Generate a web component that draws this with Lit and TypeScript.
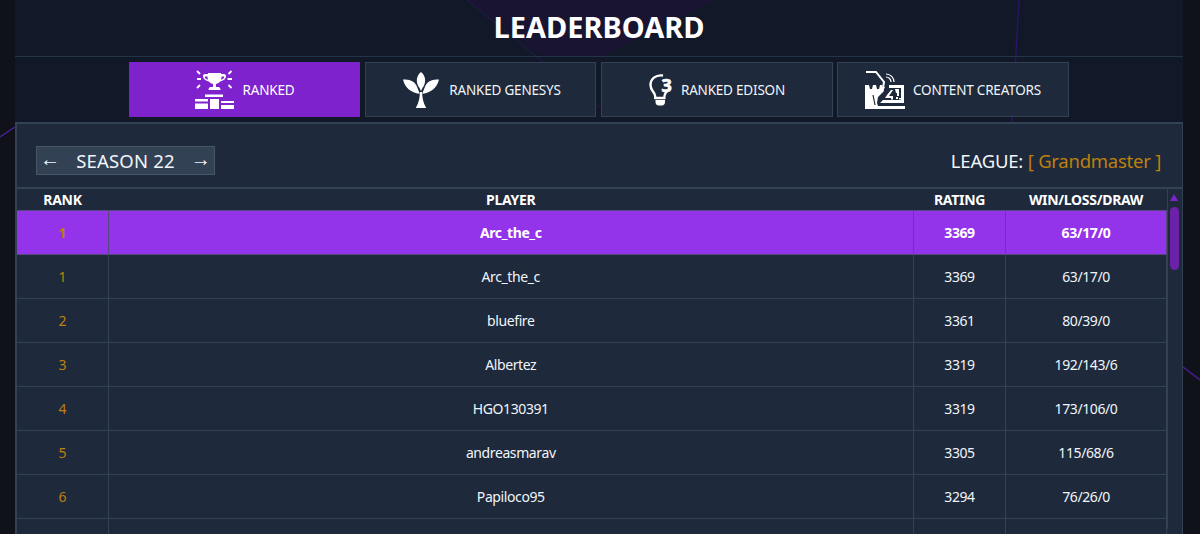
import { LitElement, html, css, svg } from "lit";
import { customElement } from "lit/decorators.js";

const rows = [
  ["1", "Arc_the_c", "3369", "63/17/0"],
  ["2", "bluefire", "3361", "80/39/0"],
  ["3", "Albertez", "3319", "192/143/6"],
  ["4", "HGO130391", "3319", "173/106/0"],
  ["5", "andreasmarav", "3305", "115/68/6"],
  ["6", "Papiloco95", "3294", "76/26/0"],
  ["", "", "", ""],
];

const trophy = svg`<svg class="ico" width="39" height="39" viewBox="0 0 39 39" fill="#fff">
  <path fill-rule="evenodd" d="M13 3h13v1h3c1.500 0 2 1 2 2 0 3-3 5-6 5.500-1 1.500-2.500 2-4 2.500v3h2.500c1 0 2 1 2 3h-12c0-2 1-3 2-3h2.500v-3c-1.500-.5-3-1-4-2.500-3-.5-6-2.500-6-5.500 0-1 .5-2 2-2h3zM10.500 6.500c-.5 0-.8.5-.6 1 .3 1 1.300 1.700 3 2.200l-.5-3.200zM28.500 6.500c.5 0 .8.5.6 1-.3 1-1.300 1.700-3 2.200l.5-3.200z"/>
  <path d="M10 24.500h18V27H10zM15 29h9v10h-9zM0 29h13v2.500H0zM0 33.500h13V39H0zM26 31h13v2H26zM26 35h13v4H26z"/>
  <path d="M2 1l3 3" stroke="#fff" stroke-width="1.800"/><path d="M2 9h4M32.500 9h4.500M5 15l-3 3M36.500 1l-3 3M33.500 15l3 3" stroke="#fff" stroke-width="1.800"/>
</svg>`;

const sprout = svg`<svg class="ico" width="36" height="36" viewBox="0 0 38 38" fill="#fff">
  <path d="M19 0c5 4 6 11 1.500 17l-1.500 3-1.500-3C13 11 14 4 19 0z"/>
  <path d="M0 8c7-1 13 2 15 8l2.500 6.500-.5.500C9 22 2 17 0 8zM38 8c-7-1-13 2-15 8l-2.500 6.500.5.500C29 22 36 17 38 8z"/>
  <path d="M17.800 21h2.400c0 6 1 11 4.300 17H13.500c3.300-6 4.300-11 4.300-17z"/>
</svg>`;

const bulb = svg`<svg class="ico" width="24" height="32" viewBox="0 0 24 32">
  <path d="M14 1.500C6.500.5 1.500 5 1.500 11c0 4 2.300 6 3.800 8.500.9 1.500 1 3 1 4.500h9c0-1.500.2-3 1-4.500.4-.7 1-1.300 1.600-2" fill="none" stroke="#fff" stroke-width="2.400"/>
  <path d="M6.500 26h9.500v2c0 2-1.400 3.500-3 3.500H9.500c-1.600 0-3-1.500-3-3.500z" fill="#fff"/>
  <text class="three" x="17.500" y="17.500" text-anchor="middle">3</text>
</svg>`;

const creator = svg`<svg class="ico" width="40" height="38" viewBox="0 0 40 38" fill="#fff">
  <path d="M1 1h10l8 10-1 6" fill="none" stroke="#fff" stroke-width="2"/>
  <path d="M16 16h4l-2 4z"/>
  <path d="M21 6a5 5 0 0 1 5 5M21 3a8 8 0 0 1 8 8" fill="none" stroke="#fff" stroke-width="1.200"/>
  <path d="M0 14h4l1 4h2l1-4h3l1 4h2l1-4h2l2 6-6 6-1 6 1 3H0zM0 35h40v3H0z"/>
  <path d="M8 24l2 10" stroke="#1e293b" stroke-width="1.200"/>
  <path d="M24 14h15v18H15l3-3h18V17H24z"/>
  <path d="M30 18h4v7h-2v-3h-1zM26 27h2v1.500h-2zM31 26h2v2h-2zM34 27h2v1.500h-2zM22 24l4-5 2 0-4 6h4v2H20z"/>
</svg>`;

@customElement("app-root")
export class AppRoot extends LitElement {
  static styles = css`
    :host {
      display: block;
      position: relative;
      height: 534px;
      overflow: hidden;
      background: #0f1319;
      font-family: "Noto Sans", "Open Sans", sans-serif;
      color: #fff;
    }
    .bg {
      position: absolute;
      inset: 0;
    }
    .headbg {
      position: absolute;
      inset: 0;
      background: #111827;
    }
    .shell {
      position: relative;
      margin: 0 17px 0 15px;
      height: 534px;
    }
    header {
      position: relative;
      height: 56px;
      display: flex;
      align-items: center;
      justify-content: center;
      border-bottom: 1px solid #243346;
    }
    h1 {
      margin: 0;
      font-size: 29px;
      font-weight: 700;
      line-height: 1;
      position: relative;
      top: -2px;
    }
    nav {
      position: relative;
      display: flex;
      justify-content: center;
      gap: 5px;
      padding-top: 5px;
      height: 65px;
      box-sizing: border-box;
    }
    .tab {
      width: 231px;
      height: 55px;
      box-sizing: border-box;
      display: flex;
      align-items: center;
      justify-content: center;
      gap: 9px;
      background: #1e293b;
      border: 1px solid #334155;
      font-size: 13.500px;
      letter-spacing: -0.2px;
      color: #f1f5f9;
    }
    .tab.on {
      background: #7e22ce;
      border-color: #7e22ce;
      color: #fff;
    }
    .tab.genesys {
      gap: 10px;
      padding-left: 3px;
    }
    .tab.edison {
      width: 232px;
      gap: 8px;
      margin-right: -1px;
    }
    .tab.creators {
      width: 232px;
      gap: 8px;
    }
    .three {
      font: 700 18px "Noto Sans", sans-serif;
      fill: #fff;
      stroke: #fff;
      stroke-width: 0.7px;
    }
    .panel {
      position: relative;
      background: #1e293b;
      border-style: solid;
      border-color: #334155;
      border-width: 2px 1px 0 2px;
      height: 412px;
      box-sizing: border-box;
    }
    .top {
      height: 65px;
      display: flex;
      align-items: center;
      justify-content: space-between;
      padding: 10px 21px 0 19px;
      box-sizing: border-box;
      border-bottom: 2px solid #334155;
    }
    .season {
      width: 179px;
      height: 29px;
      box-sizing: border-box;
      display: flex;
      align-items: center;
      justify-content: space-between;
      padding: 0 3px;
      background: #334155;
      border: 1px solid #475569;
      font-size: 18.500px;
      letter-spacing: 0.2px;
      color: #f1f5f9;
    }
    .go {
      font-size: 20px;
      line-height: 1;
      padding-bottom: 4px;
    }
    .league {
      font-size: 18.500px;
      letter-spacing: -0.2px;
      color: #f1f5f9;
    }
    .league b {
      font-weight: 400;
      letter-spacing: -0.25px;
      color: #bf800f;
    }
    .body {
      display: flex;
      align-items: flex-start;
    }
    table {
      width: 1150px;
      flex: none;
      border-collapse: collapse;
      table-layout: fixed;
      font-size: 14px;
      letter-spacing: -0.4px;
      color: #f1f5f9;
    }
    th {
      height: 21px;
      padding: 0;
      font-size: 14px;
      letter-spacing: -0.3px;
      font-weight: 700;
      color: #fff;
    }
    td {
      height: 43px;
      padding: 0;
      text-align: center;
      border: 1px solid #334155;
    }
    tr td:first-child {
      border-left: 0;
    }
    .c-rank {
      width: 91px;
    }
    .c-rating {
      width: 92px;
    }
    .c-wld {
      width: 161px;
    }
    .rank {
      color: #bf800f;
    }
    tr.me td {
      background: #9333ea;
      border-color: #55497f;
      color: #fff;
      font-weight: 700;
    }
    tr.me td.rank {
      color: #bf800f;
    }
    .bar {
      width: 15px;
      flex: none;
      padding: 5px 0 0 2px;
      box-sizing: border-box;
      border-left: 1px solid #334155;
      height: 340px;
    }
    .arrow {
      width: 0;
      height: 0;
      border: 4.500px solid transparent;
      border-top: 0;
      border-bottom: 7px solid #7e22ce;
    }
    .thumb {
      margin-top: 6px;
      width: 9px;
      height: 63px;
      border-radius: 4.500px;
      background: #6b21a8;
    }
  `;

  render() {
    return html`
      <svg class="bg" width="1200" height="534" viewBox="0 0 1200 534" fill="none">
        <path d="M0 137L15 127" stroke="#4c1d95" stroke-width="1.500" />
        <path d="M1183 367L1200 380" stroke="#4c1d95" stroke-width="1.500" />
      </svg>
      <div class="shell">
        <div class="headbg">
          <svg width="1168" height="122" viewBox="0 0 1168 122" fill="none">
            <path d="M452 0H700L585 57H530z" fill="#1a1433" />
            <path d="M452 0L590 112" stroke="#2b1858" />
            <path d="M1004 0L997 122" stroke="#2b1565" stroke-width="1.500" />
          </svg>
        </div>
        <header><h1>LEADERBOARD</h1></header>
        <nav>
          <div class="tab on">${trophy}<span>RANKED</span></div>
          <div class="tab genesys">${sprout}<span>RANKED GENESYS</span></div>
          <div class="tab edison">${bulb}<span>RANKED EDISON</span></div>
          <div class="tab creators">${creator}<span>CONTENT CREATORS</span></div>
        </nav>
        <section class="panel">
          <div class="top">
            <div class="season"><span class="go">←</span><span>SEASON 22</span><span class="go">→</span></div>
            <div class="league">LEAGUE: <b>[ Grandmaster ]</b></div>
          </div>
          <div class="body">
            <table>
              <colgroup><col class="c-rank" /><col /><col class="c-rating" /><col class="c-wld" /></colgroup>
              <thead><tr><th>RANK</th><th>PLAYER</th><th>RATING</th><th>WIN/LOSS/DRAW</th></tr></thead>
              <tbody>
                <tr class="me"><td class="rank">1</td><td>Arc_the_c</td><td>3369</td><td>63/17/0</td></tr>
                ${rows.map((r) => html`<tr><td class="rank">${r[0]}</td><td>${r[1]}</td><td>${r[2]}</td><td>${r[3]}</td></tr>`)}
              </tbody>
            </table>
            <div class="bar"><div class="arrow"></div><div class="thumb"></div></div>
          </div>
        </section>
      </div>
    `;
  }
}
